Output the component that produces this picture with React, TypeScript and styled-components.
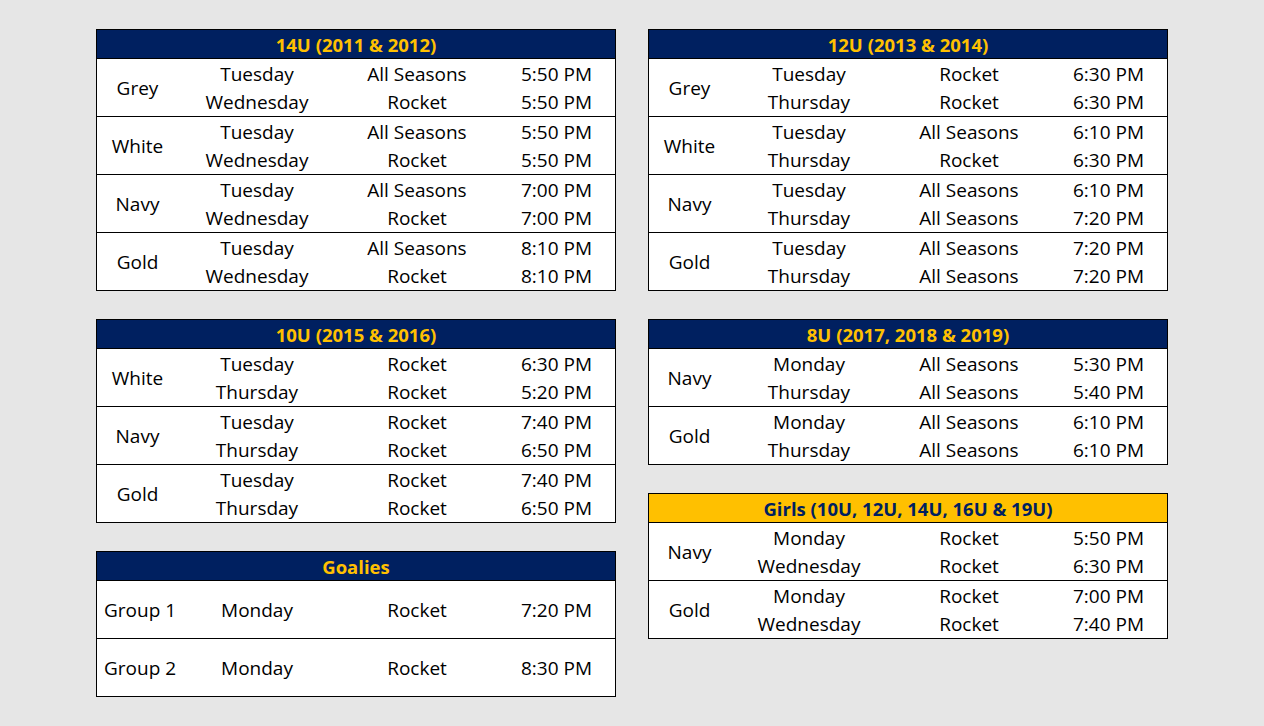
import React from 'react';
import styled, { createGlobalStyle } from 'styled-components';

const GlobalStyle = createGlobalStyle`
  html, body {
    margin: 0;
    padding: 0;
    background: #e6e6e6;
  }
  body {
    font-family: "Open Sans", "Liberation Sans", sans-serif;
    color: #000;
  }
`;

const Page = styled.div`
  display: flex;
  gap: 32px;
  padding: 29px 0 0 96px;
  height: 726px;
  box-sizing: border-box;
`;

const Column = styled.div`
  display: flex;
  flex-direction: column;
  gap: 28px;
  width: 520px;
`;

const Table = styled.div`
  border: 1px solid #000;
  background: #fff;
`;

const Header = styled.div<{ $gold?: boolean }>`
  height: 28px;
  border-bottom: 1px solid #000;
  background: ${p => (p.$gold ? '#ffc000' : '#002060')};
  color: ${p => (p.$gold ? '#002060' : '#ffc000')};
  font-weight: 700;
  font-size: 18.5px;
  display: flex;
  align-items: center;
  justify-content: center;
`;

const Group = styled.div<{ $single?: boolean }>`
  display: grid;
  grid-template-columns: 81px 158px 162px 1fr;
  grid-template-rows: ${p => (p.$single ? '57px' : '29px 28px')};
  border-bottom: 1px solid #000;
  font-size: 19px;

  &:last-child {
    border-bottom: none;
  }
`;

const Label = styled.div<{ $left?: boolean }>`
  grid-row: 1 / -1;
  display: flex;
  align-items: center;
  justify-content: ${p => (p.$left ? 'flex-start' : 'center')};
  padding-left: ${p => (p.$left ? '7px' : '0')};
  white-space: nowrap;
`;

const Cell = styled.div`
  display: flex;
  align-items: center;
  justify-content: center;
  white-space: nowrap;
`;

type Slot = [string, string, string];
type GroupData = { name: string; slots: Slot[] };
type TableData = { title: string; gold?: boolean; single?: boolean; groups: GroupData[] };

const left: TableData[] = [
  {
    title: '14U (2011 & 2012)',
    groups: [
      { name: 'Grey', slots: [['Tuesday', 'All Seasons', '5:50 PM'], ['Wednesday', 'Rocket', '5:50 PM']] },
      { name: 'White', slots: [['Tuesday', 'All Seasons', '5:50 PM'], ['Wednesday', 'Rocket', '5:50 PM']] },
      { name: 'Navy', slots: [['Tuesday', 'All Seasons', '7:00 PM'], ['Wednesday', 'Rocket', '7:00 PM']] },
      { name: 'Gold', slots: [['Tuesday', 'All Seasons', '8:10 PM'], ['Wednesday', 'Rocket', '8:10 PM']] },
    ],
  },
  {
    title: '10U (2015 & 2016)',
    groups: [
      { name: 'White', slots: [['Tuesday', 'Rocket', '6:30 PM'], ['Thursday', 'Rocket', '5:20 PM']] },
      { name: 'Navy', slots: [['Tuesday', 'Rocket', '7:40 PM'], ['Thursday', 'Rocket', '6:50 PM']] },
      { name: 'Gold', slots: [['Tuesday', 'Rocket', '7:40 PM'], ['Thursday', 'Rocket', '6:50 PM']] },
    ],
  },
  {
    title: 'Goalies',
    single: true,
    groups: [
      { name: 'Group 1', slots: [['Monday', 'Rocket', '7:20 PM']] },
      { name: 'Group 2', slots: [['Monday', 'Rocket', '8:30 PM']] },
    ],
  },
];

const right: TableData[] = [
  {
    title: '12U (2013 & 2014)',
    groups: [
      { name: 'Grey', slots: [['Tuesday', 'Rocket', '6:30 PM'], ['Thursday', 'Rocket', '6:30 PM']] },
      { name: 'White', slots: [['Tuesday', 'All Seasons', '6:10 PM'], ['Thursday', 'Rocket', '6:30 PM']] },
      { name: 'Navy', slots: [['Tuesday', 'All Seasons', '6:10 PM'], ['Thursday', 'All Seasons', '7:20 PM']] },
      { name: 'Gold', slots: [['Tuesday', 'All Seasons', '7:20 PM'], ['Thursday', 'All Seasons', '7:20 PM']] },
    ],
  },
  {
    title: '8U (2017, 2018 & 2019)',
    groups: [
      { name: 'Navy', slots: [['Monday', 'All Seasons', '5:30 PM'], ['Thursday', 'All Seasons', '5:40 PM']] },
      { name: 'Gold', slots: [['Monday', 'All Seasons', '6:10 PM'], ['Thursday', 'All Seasons', '6:10 PM']] },
    ],
  },
  {
    title: 'Girls (10U, 12U, 14U, 16U & 19U)',
    gold: true,
    groups: [
      { name: 'Navy', slots: [['Monday', 'Rocket', '5:50 PM'], ['Wednesday', 'Rocket', '6:30 PM']] },
      { name: 'Gold', slots: [['Monday', 'Rocket', '7:00 PM'], ['Wednesday', 'Rocket', '7:40 PM']] },
    ],
  },
];

const Schedule: React.FC<{ data: TableData }> = ({ data }) => (
  <Table>
    <Header $gold={data.gold}>{data.title}</Header>
    {data.groups.map(g => (
      <Group key={g.name} $single={data.single}>
        <Label $left={data.single}>{g.name}</Label>
        {g.slots.map((s, i) => (
          <React.Fragment key={i}>
            <Cell>{s[0]}</Cell>
            <Cell>{s[1]}</Cell>
            <Cell>{s[2]}</Cell>
          </React.Fragment>
        ))}
      </Group>
    ))}
  </Table>
);

export default function App() {
  return (
    <>
      <GlobalStyle />
      <Page>
        <Column>
          {left.map(t => (
            <Schedule key={t.title} data={t} />
          ))}
        </Column>
        <Column>
          {right.map(t => (
            <Schedule key={t.title} data={t} />
          ))}
        </Column>
      </Page>
    </>
  );
}
